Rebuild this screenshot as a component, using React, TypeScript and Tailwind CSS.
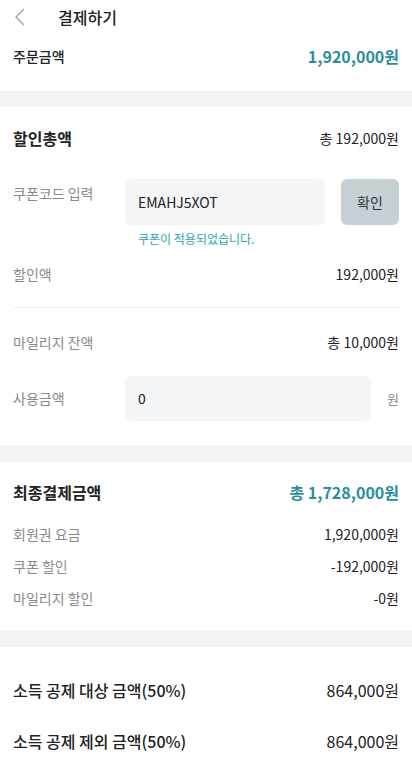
import React from "react";

const font = { fontFamily: '"Noto Sans CJK KR", "Noto Sans", sans-serif' };

function Row({ label, value }: { label: string; value: string }) {
  return (
    <div className="flex items-center justify-between h-5">
      <span className="text-[14px] text-[#8a8a8a]">{label}</span>
      <span className="text-[14px] text-[#222]">{value}</span>
    </div>
  );
}

function Band() {
  return <div className="h-[16px] bg-[#f1f3f5]" />;
}

export default function App() {
  return (
    <div className="w-[412px] min-h-[777px] bg-white" style={font}>
      {/* header */}
      <div className="flex items-center h-[34px] px-[14px]">
        <svg width="11" height="18" viewBox="0 0 11 18" fill="none">
          <polyline points="10,1 2,9 10,17" stroke="#a0a0a0" strokeWidth="1.4" />
        </svg>
        <span className="ml-[33px] text-[16px] font-medium text-[#222]">결제하기</span>
      </div>

      <div className="flex items-center justify-between h-6 px-[13px] mt-[10px] mb-[23px]">
        <span className="text-[14px] font-medium text-[#222]">주문금액</span>
        <span className="text-[16px] font-bold text-[#2a8f9c]">1,920,000원</span>
      </div>

      <Band />

      {/* discount */}
      <div className="px-[13px] pt-[19px] pb-[24px]">
        <div className="flex items-center justify-between h-6">
          <span className="text-[16px] font-bold text-[#222]">할인총액</span>
          <span className="text-[14px] text-[#222]">총 192,000원</span>
        </div>

        <div className="flex mt-[29px]">
          <span className="w-[112px] pt-[4px] text-[14px] leading-5 text-[#8a8a8a]">쿠폰코드 입력</span>
          <div className="flex-1">
            <div className="flex gap-4">
              <div className="flex items-center flex-1 h-[46px] rounded-md bg-[#f3f5f7] px-[13px] text-[14px] text-[#222]">
                EMAHJ5XOT
              </div>
              <button className="w-[58px] h-[46px] rounded-md bg-[#c6d0d5] text-[14px] text-[#333]">확인</button>
            </div>
            <div className="mt-[5px] pl-[13px] text-[12px] leading-[18px] text-[#2aa3b3]">쿠폰이 적용되었습니다.</div>
          </div>
        </div>

        <div className="mt-4">
          <Row label="할인액" value="192,000원" />
        </div>

        <div className="mt-[23px] h-px bg-[#f0f1f2]" />

        <div className="mt-[24px]">
          <Row label="마일리지 잔액" value="총 10,000원" />
        </div>

        <div className="flex items-center mt-[24px]">
          <span className="w-[112px] text-[14px] text-[#8a8a8a]">사용금액</span>
          <div className="flex items-center w-[246px] h-[45px] rounded-md bg-[#f3f5f7] px-[13px] text-[14px] text-[#222]">0</div>
          <span className="ml-auto text-[13px] text-[#8a8a8a]">원</span>
        </div>
      </div>

      <div className="h-[17px] bg-[#f1f3f5]" />

      {/* final */}
      <div className="px-[13px] pt-[18px] pb-[22px]">
        <div className="flex items-center justify-between h-6">
          <span className="text-[16px] font-bold text-[#222]">최종결제금액</span>
          <span className="text-[16px] font-bold text-[#2a8f9c]">총 1,728,000원</span>
        </div>
        <div className="flex flex-col gap-3 mt-5">
          <Row label="회원권 요금" value="1,920,000원" />
          <Row label="쿠폰 할인" value="-192,000원" />
          <Row label="마일리지 할인" value="-0원" />
        </div>
      </div>

      <div className="h-[17px] bg-[#f1f3f5]" />

      {/* deduction */}
      <div className="flex flex-col gap-[27px] px-[13px] pt-[31px] pb-6">
        <div className="flex items-center justify-between h-6">
          <span className="text-[16px] font-medium text-[#222]">소득 공제 대상 금액(50%)</span>
          <span className="text-[16px] text-[#222]">864,000원</span>
        </div>
        <div className="flex items-center justify-between h-6">
          <span className="text-[16px] font-medium text-[#222]">소득 공제 제외 금액(50%)</span>
          <span className="text-[16px] text-[#222]">864,000원</span>
        </div>
      </div>
    </div>
  );
}
